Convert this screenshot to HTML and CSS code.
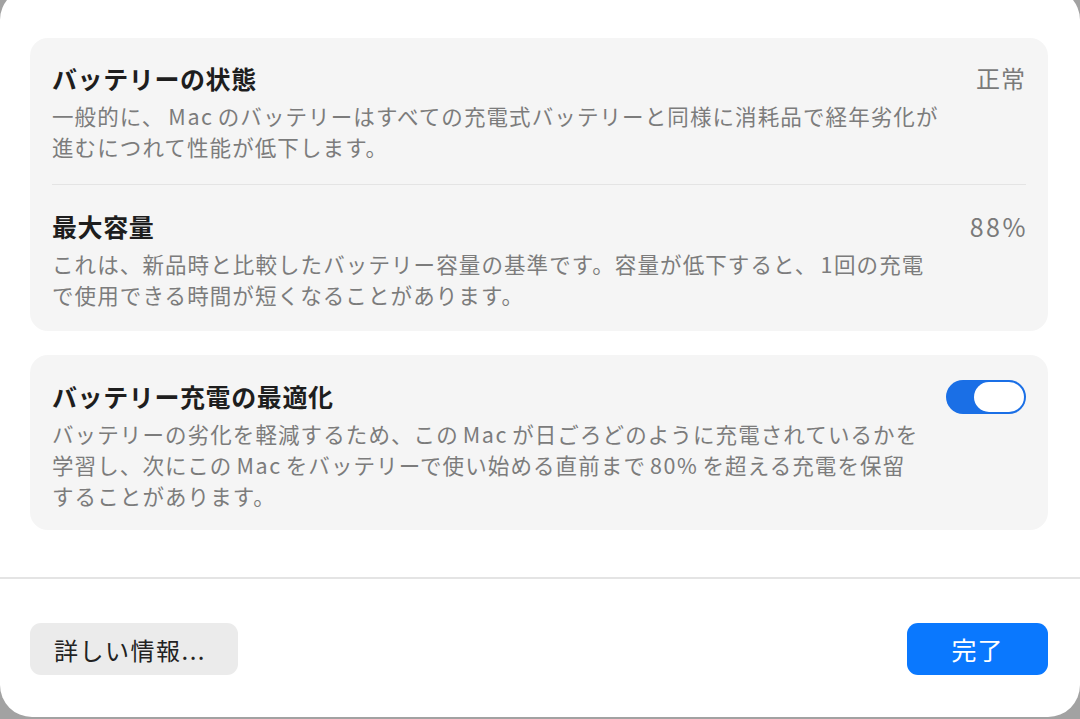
FILE: index.html
```html
<!DOCTYPE html>
<html lang="ja">
<head>
<meta charset="utf-8">
<link rel="stylesheet" href="styles.css">
</head>
<body>
<div class="sheet">
  <div class="content">
    <section class="card">
      <div class="row row-first">
        <div class="text">
          <div class="title">バッテリーの状態</div>
          <div class="desc">一般的に、<span class="latin">Mac</span>のバッテリーはすべての充電式バッテリーと同様に消耗品で経年劣化が<br>進むにつれて性能が低下します。</div>
        </div>
        <div class="value">正常</div>
      </div>
      <div class="divider"></div>
      <div class="row row-second">
        <div class="text">
          <div class="title">最大容量</div>
          <div class="desc">これは、新品時と比較したバッテリー容量の基準です。容量が低下すると、<span class="latin-l">1</span>回の充電<br>で使用できる時間が短くなることがあります。</div>
        </div>
        <div class="value value-num">88%</div>
      </div>
    </section>
    <section class="card card-toggle">
      <div class="row row-toggle">
        <div class="text">
          <div class="title">バッテリー充電の最適化</div>
          <div class="desc">バッテリーの劣化を軽減するため、この<span class="latin">Mac</span>が日ごろどのように充電されているかを<br>学習し、次にこの<span class="latin">Mac</span>をバッテリーで使い始める直前まで<span class="latin">80%</span>を超える充電を保留<br>することがあります。</div>
        </div>
        <div class="toggle"><div class="knob"></div></div>
      </div>
    </section>
  </div>
  <div class="footer">
    <button class="btn btn-secondary">詳しい情報...</button>
    <button class="btn btn-primary">完了</button>
  </div>
</div>
</body>
</html>
```

FILE: styles.css
```css
html, body {
  margin: 0;
  padding: 0;
}
body {
  width: 1080px;
  height: 719px;
  overflow: hidden;
  background: #a2a2a2;
  font-family: "Noto Sans CJK JP", "Noto Sans", sans-serif;
}
.sheet {
  margin-top: -12px;
  height: 729px;
  background: #ffffff;
  border-radius: 32px;
  display: flex;
  flex-direction: column;
}
.content {
  padding: 50px 32px 0 30px;
  display: flex;
  flex-direction: column;
  gap: 24px;
}
.card {
  background: #f5f5f5;
  border-radius: 18px;
  padding: 0 22px;
}
.row {
  display: flex;
  justify-content: space-between;
  align-items: flex-start;
}
.row-first {
  padding: 23px 0 22px;
}
.row-second {
  padding: 24px 0 21px;
}
.row-toggle {
  padding: 24px 0 19px;
}
.title {
  font-size: 25px;
  font-weight: 700;
  line-height: 34px;
  color: #1e1e1e;
  letter-spacing: 0.6px;
}
.desc {
  margin-top: 5px;
  font-size: 21.5px;
  line-height: 31px;
  color: #7c7c7c;
  letter-spacing: 1.1px;
}
.latin {
  margin: 0 4px 0 4px;
  letter-spacing: 1.6px;
}
.latin-l {
  margin-left: 3px;
  letter-spacing: 1.6px;
}
.value {
  font-size: 24px;
  line-height: 34px;
  color: #7a7a7a;
  letter-spacing: 1px;
}
.value-num {
  font-size: 25px;
  letter-spacing: 2.5px;
  margin-right: -2px;
}
.divider {
  height: 1px;
  background: #e4e4e4;
}
.toggle {
  margin-top: 1px;
  width: 80px;
  height: 34px;
  border-radius: 17px;
  background: #1a6fe6;
  display: flex;
  justify-content: flex-end;
  align-items: center;
  padding: 0 2px;
  box-sizing: border-box;
}
.knob {
  width: 50px;
  height: 30px;
  border-radius: 15px;
  background: #ffffff;
}
.footer {
  margin-top: 47px;
  border-top: 2px solid #e4e4e4;
  padding: 44px 32px 0 30px;
  display: flex;
  justify-content: space-between;
}
.btn {
  height: 52px;
  border: none;
  border-radius: 11px;
  font-family: "Noto Sans CJK JP", "Noto Sans", sans-serif;
  font-size: 24px;
  padding: 0;
}
.btn-secondary {
  width: 208px;
  background: #ebebeb;
  color: #222222;
  letter-spacing: 1.5px;
  padding-right: 8px;
}
.btn-primary {
  width: 141px;
  background: #0a78fe;
  color: #ffffff;
  font-size: 25px;
  letter-spacing: 1px;
}
```
